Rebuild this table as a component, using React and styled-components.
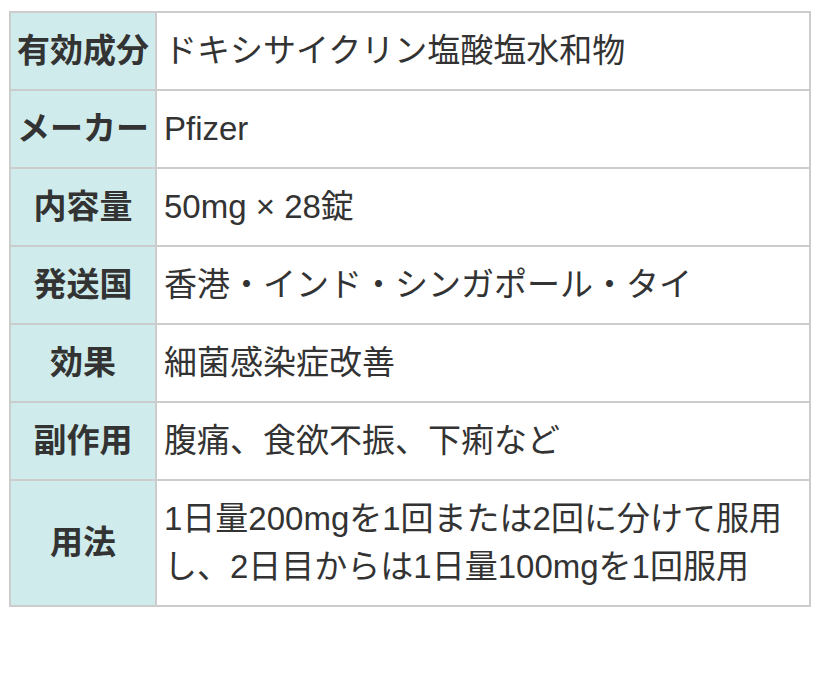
import styled, { createGlobalStyle } from 'styled-components';

const GlobalStyle = createGlobalStyle`
    body {
        margin: 0;
        background: #fff;
        font-family: "Liberation Sans", "Noto Sans CJK JP", sans-serif;
        color: #333;
    }
`

const rows = [
    { label: '有効成分', value: ['ドキシサイクリン塩酸塩水和物'] },
    { label: 'メーカー', value: ['Pfizer'] },
    { label: '内容量', value: ['50mg × 28錠'] },
    { label: '発送国', value: ['香港・インド・シンガポール・タイ'] },
    { label: '効果', value: ['細菌感染症改善'] },
    { label: '副作用', value: ['腹痛、食欲不振、下痢など'] },
    { label: '用法', value: ['1日量200mgを1回または2回に分けて服用', 'し、2日目からは1日量100mgを1回服用'] },
];

const App = () => {
    return (<>
        <GlobalStyle />
        <Wrap>
            <Table>
                <tbody>
                    {rows.map((row) => (
                        <tr key={row.label}>
                            <Head>{row.label}</Head>
                            <Cell>
                                {row.value.map((line, i) => (
                                    <Line key={i}>{line}</Line>
                                ))}
                            </Cell>
                        </tr>
                    ))}
                </tbody>
            </Table>
        </Wrap>
    </>)
}

const Wrap = styled.div`
    padding: 11px 9px 0 9px;
`

const Table = styled.table`
    width: 802px;
    border-collapse: collapse;
    font-size: 33px;
    line-height: 48px;
`

const Head = styled.th`
    background-color: #cfebeb;
    border: 2px solid #ccc;
    padding: 14px 6px;
    width: 132px;
    white-space: nowrap;
    text-align: center;
    font-weight: bold;
    color: #333;
`

const Cell = styled.td`
    border: 2px solid #ccc;
    padding: 14px 7px;
    text-align: left;
    color: #333;
`

const Line = styled.div`
    white-space: nowrap;
`

export default App;
